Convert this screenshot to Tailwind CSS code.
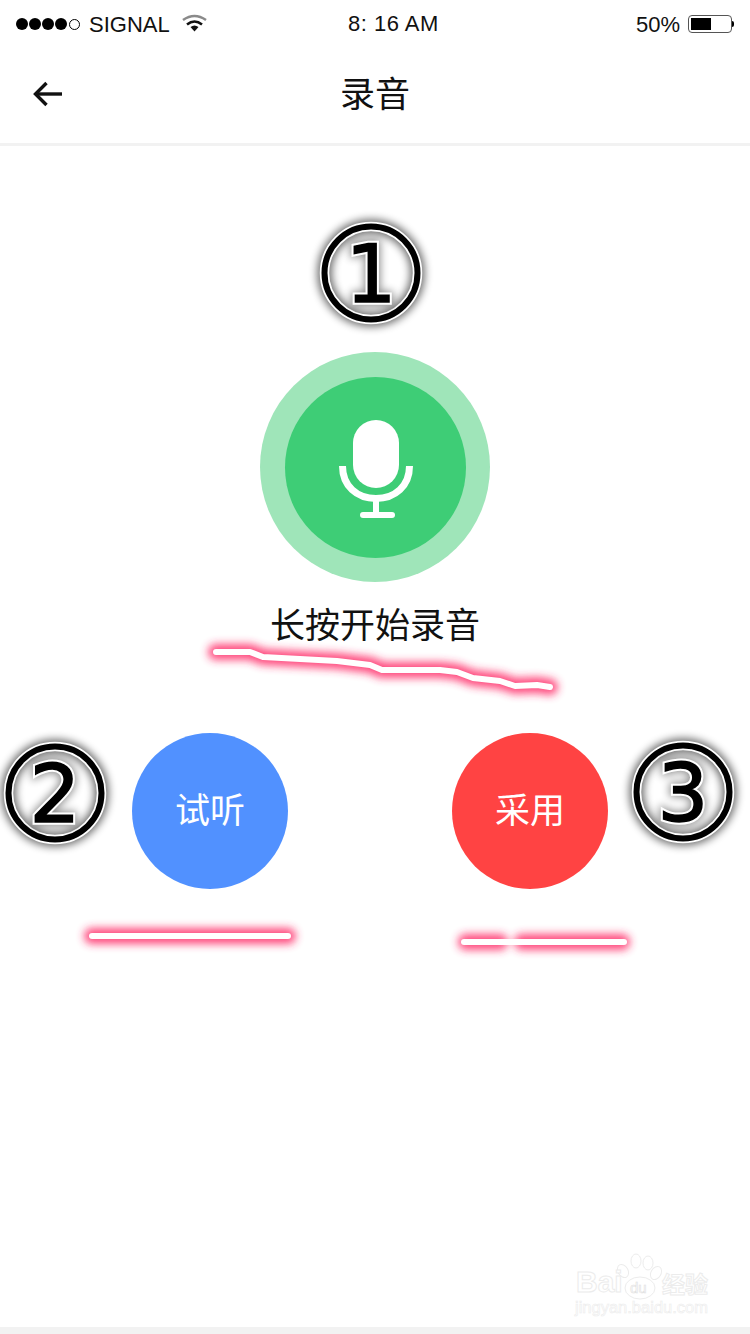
<!DOCTYPE html>
<html lang="zh">
<head>
  <meta charset="UTF-8">
  <meta name="viewport" content="width=device-width, initial-scale=1.0">
  <title>录音</title>
  <script src="https://cdn.jsdelivr.net/npm/@tailwindcss/browser@4"></script>
</head>
<body class="bg-white font-['Liberation_Sans','Noto_Sans_CJK_SC',sans-serif] text-black">
  <div class="relative w-[750px] h-[1334px] overflow-hidden flex flex-col">

    <!-- status bar -->
    <div class="relative h-12 shrink-0 flex items-center pl-4 pr-4 text-[22px] text-[#111]">
      <div class="flex items-center gap-[1px]">
        <span class="w-3 h-3 rounded-full bg-black"></span>
        <span class="w-3 h-3 rounded-full bg-black"></span>
        <span class="w-3 h-3 rounded-full bg-black"></span>
        <span class="w-3 h-3 rounded-full bg-black"></span>
        <span class="w-[11px] h-[11px] rounded-full border border-black ml-[1px]"></span>
      </div>
      <span class="ml-[9px]">SIGNAL</span>
      <svg class="ml-3 -mt-[2px]" width="25" height="18" viewBox="0 0 25 18" fill="none">
        <path d="M1 6 Q12.5 -2 24 6" stroke="#8a8a8a" stroke-width="2.6"/>
        <path d="M5 10.5 Q12.5 4.5 20 10.5" stroke="#111" stroke-width="2.6"/>
        <path d="M8.5 13 Q12.5 10 16.5 13 L12.5 17.5 Z" fill="#111"/>
      </svg>
      <span class="absolute left-[348px] top-[7px] tracking-[0.5px] whitespace-pre">8: 16 AM</span>
      <span class="ml-auto">50%</span>
      <div class="ml-2 w-[44px] h-[18px] rounded-[4px] border border-[#555] p-[2px] flex">
        <div class="w-[20px] bg-black"></div>
      </div>
      <div class="w-[2px] h-[6px] bg-black rounded-r-full"></div>
    </div>

    <!-- nav -->
    <div class="h-[95px] shrink-0 flex items-center justify-center relative">
      <svg class="absolute left-[33px] top-[33px]" width="30" height="26" viewBox="0 0 30 26" fill="none" stroke="#111" stroke-width="3.400">
        <path d="M29 13H3"/>
        <path d="M13.5 2 L2.5 13 L13.5 24"/>
      </svg>
      <span class="text-[35px] leading-none text-[#111] pb-[3px]">录音</span>
    </div>
    <div class="h-[3px] shrink-0 bg-[#f2f2f2]"></div>

    <!-- content -->
    <div class="flex-1 flex flex-col items-center pt-[206px]">
      <div class="w-[230px] h-[230px] rounded-full bg-[#9fe5b9] flex items-center justify-center">
        <div class="w-[181px] h-[181px] rounded-full bg-[#3ecd76] flex items-center justify-center">
          <svg width="74" height="98" viewBox="0 0 74 98" fill="none" class="mt-[3px] ml-[1px]">
            <rect x="14" y="0" width="46" height="68" rx="23" fill="#fff"/>
            <path d="M3.5 46 C3.5 66 18 78.5 37 78.5 C56 78.5 70.500 66 70.500 46" stroke="#fff" stroke-width="7"/>
            <path d="M37 78V94" stroke="#fff" stroke-width="6"/>
            <path d="M24 95H53" stroke="#fff" stroke-width="6" stroke-linecap="round"/>
          </svg>
        </div>
      </div>
      <p class="mt-[20px] text-[35px] leading-[48px] text-[#111]">长按开始录音</p>
      <div class="mt-[83px] pr-[10px] flex justify-center gap-[164px]">
        <button class="w-[156px] h-[156px] rounded-full bg-[#5191ff] text-white text-[35px]">试听</button>
        <button class="w-[156px] h-[156px] rounded-full bg-[#ff4343] text-white text-[35px]">采用</button>
      </div>
    </div>

    <!-- bottom band -->
    <div class="h-[7px] shrink-0 bg-[#f2f2f2]"></div>

    <!-- hand-drawn annotations over the screenshot -->
    <svg class="absolute inset-0 pointer-events-none" width="750" height="1334" viewBox="0 0 750 1334" fill="none">
      <defs>
        <filter id="glow" filterUnits="userSpaceOnUse" x="0" y="600" width="750" height="400"><feGaussianBlur stdDeviation="4.500"/></filter>
        <filter id="shade" filterUnits="userSpaceOnUse" x="-90" y="-90" width="180" height="180"><feGaussianBlur stdDeviation="4"/></filter>
        <g id="ring">
          <circle r="46.500" stroke="#000" stroke-width="14" opacity="0.6" filter="url(#shade)"/>
          <circle r="46.500" stroke="#fff" stroke-width="9.500"/>
          <circle r="46.500" stroke="#000" stroke-width="6"/>
        </g>
      </defs>

      <g stroke-linecap="round" stroke-linejoin="round">
        <path d="M216 652L250 652L263 657L300 659L337 661L370 665L382 670L440 670L457 672L473 678L500 681L515 686L537 685L550 687" stroke="#ff2a68" stroke-width="16" opacity="0.85" filter="url(#glow)"/>
        <path d="M216 652L250 652L263 657L300 659L337 661L370 665L382 670L440 670L457 672L473 678L500 681L515 686L537 685L550 687" stroke="#fff" stroke-width="6"/>
        <path d="M92 936H288" stroke="#ff2a68" stroke-width="16" opacity="0.85" filter="url(#glow)"/>
        <path d="M92 936H288" stroke="#fff" stroke-width="6"/>
        <path d="M466 942H500M522 942H622" stroke="#ff2a68" stroke-width="16" opacity="0.85" filter="url(#glow)"/>
        <path d="M464 942H624" stroke="#fff" stroke-width="6"/>
      </g>

      <g font-family="'DejaVu Sans', sans-serif" font-size="80" text-anchor="middle">
        <g transform="translate(371 273)">
          <use href="#ring"/>
          <text y="29" fill="#000" stroke="#000" stroke-width="8" opacity="0.45" filter="url(#shade)">1</text>
          <text y="29" fill="#000" stroke="#fff" stroke-width="5.500" paint-order="stroke">1</text>
          <text y="29" fill="#000" stroke="#000" stroke-width="1.500">1</text>
        </g>
        <g transform="translate(55 793)">
          <use href="#ring"/>
          <text y="29" fill="#000" stroke="#000" stroke-width="8" opacity="0.45" filter="url(#shade)">2</text>
          <text y="29" fill="#000" stroke="#fff" stroke-width="5.500" paint-order="stroke">2</text>
          <text y="29" fill="#000" stroke="#000" stroke-width="1.500">2</text>
        </g>
        <g transform="translate(683 792)">
          <use href="#ring"/>
          <text y="29" fill="#000" stroke="#000" stroke-width="8" opacity="0.45" filter="url(#shade)">3</text>
          <text y="29" fill="#000" stroke="#fff" stroke-width="5.500" paint-order="stroke">3</text>
          <text y="29" fill="#000" stroke="#000" stroke-width="1.500">3</text>
        </g>
      </g>

      <!-- watermark -->
      <g stroke="#ececec" stroke-width="1" fill="#fff">
        <ellipse cx="623" cy="1271" rx="5" ry="7" transform="rotate(-30 623 1271)"/>
        <ellipse cx="636" cy="1261" rx="5" ry="7"/>
        <ellipse cx="648" cy="1263" rx="5" ry="7"/>
        <ellipse cx="656" cy="1273" rx="5" ry="7" transform="rotate(30 656 1273)"/>
        <ellipse cx="640" cy="1288" rx="15" ry="11"/>
        <text x="576" y="1292" font-size="30" font-family="'Liberation Sans', sans-serif" font-weight="700">Bai</text>
        <text x="630" y="1293" font-size="15" font-family="'Liberation Sans', sans-serif" stroke="#e0e0e0" stroke-width="0.6">du</text>
        <text x="662" y="1293" font-size="23" font-family="'Noto Sans CJK SC', sans-serif" font-weight="700">经验</text>
        <text x="575" y="1313" font-size="16.500" font-family="'Liberation Sans', sans-serif" stroke-width="0.6">jingyan.baidu.com</text>
      </g>
    </svg>
  </div>
</body>
</html>
